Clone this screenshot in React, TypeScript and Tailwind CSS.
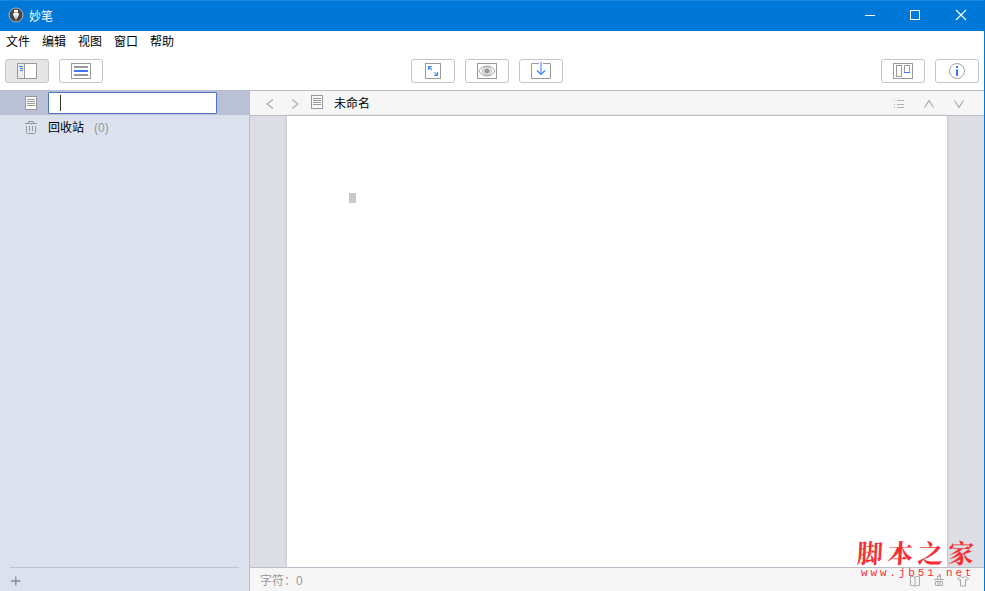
import type { ReactNode } from "react";

interface ButtonProps {
  label: string;
  active?: boolean;
  children: ReactNode;
}

const menus = ["文件", "编辑", "视图", "窗口", "帮助"];

function ToolButton({ label, active, children }: ButtonProps) {
  return (
    <button
      aria-label={label}
      className={
        active
          ? "flex h-6 w-11 items-center justify-center rounded-[3px] border border-[#c3c5cc] bg-[#e6e6e6]"
          : "flex h-6 w-11 items-center justify-center rounded-[3px] border border-[#c3c5cc] bg-white"
      }
    >
      <svg width="20" height="16" viewBox="0 0 20 16" fill="none" stroke="#999" className="overflow-visible">
        {children}
      </svg>
    </button>
  );
}

function PageIcon() {
  return (
    <svg width="12" height="14" viewBox="0 0 12 14" fill="none" stroke="#999">
      <rect x="0.5" y="0.5" width="11" height="13" fill="#fafafa" />
      <path d="M2 3.5h8M2 5.5h8M2 7.5h8M2 9.5h8" />
    </svg>
  );
}

function TitleBar() {
  return (
    <header className="flex h-[31px] shrink-0 items-center justify-between border-t border-[#1a86dc] bg-[#0078d7] pl-2 text-white">
      <div className="flex items-center gap-[5px]">
        <svg width="16" height="16" viewBox="0 0 16 16" className="-mt-[2px]">
          <circle cx="8" cy="8" r="7" fill="#474747" stroke="#b5b9bd" />
          <path d="M6 3h4v2.500l1 2-1.800 3.500L8 13l-1.200-2L5 7.500l1-2z" fill="#fff" />
          <path d="M6 5.500h4M8 8v4" stroke="#777" strokeWidth="0.700" />
        </svg>
        <span className="mt-px text-[12px] leading-4">妙笔</span>
      </div>
      <svg width="114" height="12" viewBox="0 0 114 12" fill="none" stroke="#fff" className="-mt-[2px] mr-[5px]">
        <path d="M0 6.500h10" />
        <rect x="45.500" y="1.500" width="9" height="9" />
        <path d="M91 1l10 10M101 1L91 11" strokeWidth="1.100" />
      </svg>
    </header>
  );
}

function Toolbar() {
  return (
    <div className="flex h-[38px] shrink-0 items-start justify-between pt-[7px] pr-[5px] pl-[5px]">
      <div className="flex w-[406px] gap-[10px]">
        <ToolButton label="侧边栏" active>
          <rect x="0.5" y="0.5" width="19" height="15" fill="#fff" />
          <path d="M1 1h6v14H1z" fill="#eee" stroke="none" />
          <path d="M7.5 1v14" />
          <path d="M2 3.5h4M3 5.500h3M3 7.500h3" stroke="#3b78ff" />
        </ToolButton>
        <ToolButton label="列表">
          <rect x="0.5" y="0.5" width="19" height="15" />
          <path d="M3 4h14M3 12h14" strokeWidth="2" />
          <path d="M3 8h14" strokeWidth="2" stroke="#3b78ff" />
        </ToolButton>
      </div>
      <div className="flex gap-[10px]">
        <ToolButton label="全屏">
          <rect x="2.500" y="0.500" width="15" height="15" />
          <path d="M5.500 7V3.500H9M5.500 3.500l3.500 3.500M11 12.500h3.500V9M14.500 12.500L11.500 9.500" stroke="#4d90f5" strokeWidth="1.200" />
        </ToolButton>
        <ToolButton label="预览">
          <rect x="0.500" y="0.500" width="19" height="15" />
          <path d="M2 8C4.500 1.500 15.500 1.500 18 8C15.500 14.500 4.500 14.500 2 8z" strokeWidth="0.900" />
          <circle cx="10" cy="8" r="4.300" strokeWidth="0.900" />
          <circle cx="10" cy="8" r="2.300" fill="#999" />
        </ToolButton>
        <ToolButton label="导出">
          <path d="M8 0.500H0.500v15h19V0.500H12" />
          <path d="M10 -1v12" stroke="#82a9fb" strokeWidth="1.600" />
          <path d="M6 7.500l4 4 4-4" stroke="#3b78ff" strokeWidth="1.200" />
        </ToolButton>
      </div>
      <div className="flex grow justify-end gap-[10px]">
        <ToolButton label="看板">
          <rect x="0.500" y="0.500" width="19" height="15" />
          <rect x="3.500" y="2.500" width="5" height="11" />
          <path d="M11.500 9V2.500h5V9" />
          <path d="M11 9.500h6" stroke="#3b78ff" />
        </ToolButton>
        <ToolButton label="信息">
          <circle cx="10" cy="8" r="7.500" strokeWidth="0.900" />
          <path d="M10 3v2M10 6.500v6.500" stroke="#3b78ff" strokeWidth="2" />
          <path d="M9 7h1" stroke="#3b78ff" />
        </ToolButton>
      </div>
    </div>
  );
}

function Sidebar() {
  return (
    <aside className="flex w-[250px] shrink-0 flex-col border-r border-[#b9bdcd] bg-[#dbe1ed]">
      <div className="flex h-6 items-center bg-[#bac0d6] pl-[25px]">
        <PageIcon />
        <div className="ml-[11px] flex h-[22px] w-[169px] items-center rounded-[1px] border border-[#4f73c7] bg-white pl-[11px]">
          <span className="h-4 w-px bg-[#333]" />
        </div>
      </div>
      <div className="flex h-[25px] items-center pl-[25px] text-[12px]">
        <svg width="12" height="13" viewBox="0 0 12 13" fill="none" stroke="#999" className="-mt-px">
          <path d="M0 2.500h12M3.500 2V0.500h5V2M1.500 5v6.500q0 1 1 1h7q1 0 1-1V5M4.500 5v5M7.500 5v5" />
        </svg>
        <span className="ml-[11px]">回收站</span>
        <span className="ml-[10px] text-[#999]">(0)</span>
      </div>
      <div className="mt-auto ml-[10px] flex h-6 w-[229px] items-center border-t border-[#bfc4d2] pt-[3px]">
        <svg width="11" height="10" viewBox="0 0 11 10" stroke="#858a95" strokeWidth="1.300">
          <path d="M1 5h9.500M5.800 0.500v9" />
        </svg>
      </div>
    </aside>
  );
}

function Editor() {
  return (
    <main className="flex min-w-0 grow flex-col">
      <div className="flex h-[25px] shrink-0 items-center justify-between border-b border-[#b9bdca] bg-[#f6f6f6] pr-[19px] pl-4">
        <div className="flex items-center">
          <svg width="34" height="10" viewBox="0 0 34 10" fill="none" stroke="#aaa" strokeWidth="1.100" className="mt-px">
            <path d="M7 0.500L1 5l6 4.500M26 0.500L32 5l-6 4.500" />
          </svg>
          <span className="-mt-[3px] ml-[11px]">
            <PageIcon />
          </span>
          <span className="mt-[2px] ml-[11px] text-[12px] leading-4">未命名</span>
        </div>
        <svg width="71" height="10" viewBox="0 0 71 10" fill="none" stroke="#aaa" className="mt-px">
          <path d="M0 1.500h1M0 5.500h1M0 8.500h1M3 1.500h7M3 5.500h7M3 8.500h7" stroke="#b5b5b5" />
          <path d="M30.500 8.500L35 1.500l4.500 7M60.500 1.500l4.500 7 4.500-7" strokeWidth="1.200" />
        </svg>
      </div>
      <div className="flex grow justify-center bg-[#dddee4]">
        <div className="mr-px ml-px w-[660px] bg-white pt-[77px] pl-[62px] shadow-[0_0_3px_#b8bac3]">
          <div className="h-[10px] w-[7px] bg-[#c9c9c9]" />
        </div>
      </div>
    </main>
  );
}

function Watermark() {
  return (
    <div className="pointer-events-none absolute top-[534px] left-[857px] text-[#f52f35]">
      <div className="flex h-[36px] w-[117px] -skew-x-3 items-center justify-between font-['Noto_Serif_CJK_SC','Noto_Sans_CJK_SC',serif] text-[26px] leading-none font-bold">
        <span>脚</span>
        <span>本</span>
        <span>之</span>
        <span>家</span>
      </div>
      <div className="-mt-[2px] ml-1 w-[116px] font-['Liberation_Mono','DejaVu_Sans_Mono',monospace] text-[11px] leading-[11px] tracking-[2.850px] whitespace-nowrap">
        www.jb51.net
      </div>
    </div>
  );
}

export default function App() {
  return (
    <div className="relative flex h-[591px] w-[985px] flex-col overflow-hidden border-r border-[#0078d7] bg-white font-['Liberation_Sans','Noto_Sans_CJK_SC',sans-serif] text-black">
      <TitleBar />
      <nav className="flex h-[21px] shrink-0 items-center gap-3 pl-[6px] text-[12px] leading-4">
        {menus.map((menu) => (
          <span key={menu}>{menu}</span>
        ))}
      </nav>
      <Toolbar />
      <div className="flex min-h-0 grow border-t border-[#b9bdca]">
        <Sidebar />
        <div className="flex min-w-0 grow flex-col">
          <Editor />
          <footer className="flex h-6 shrink-0 items-center justify-between border-t border-[#b9bdca] bg-[#f6f6f6] pr-[15px] pl-[10px] text-[12px] text-[#999]">
            <span className="pt-[2px]">字符：0</span>
            <svg width="60" height="12" viewBox="0 0 60 12" fill="none" stroke="#aaa" className="mt-[2px]">
              <path d="M1.500 1.500h3q1 0 1.500 1 .5-1 1.500-1h3v9h-3q-1 0-1.500 1-.5-1-1.500-1h-3zM6 2v9" />
              <path d="M25 4.500h10M26.500 6.500h7v4h-7zM28.500 4V1.500h3V4M29 6v4M31 6v4" />
              <path d="M48.500 3.500l3-2q2.500 2.500 5 0l3 2-1.500 2-1.500-1v6.500h-5V4.500l-1.500 1z" />
            </svg>
          </footer>
        </div>
      </div>
      <Watermark />
    </div>
  );
}
